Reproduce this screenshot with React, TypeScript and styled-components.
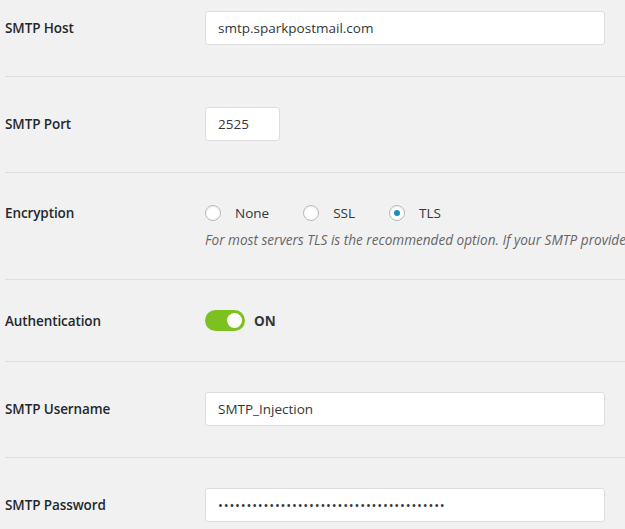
import React from "react";
import styled, {createGlobalStyle} from "styled-components";

const GlobalStyle = createGlobalStyle`
  html, body {
    margin: 0;
    padding: 0;
    background: #f1f1f1;
    overflow: hidden;
  }

  body {
    font-family: "Open Sans", "Noto Sans", sans-serif;
    font-size: 14px;
    color: #23282d;
  }
`;

const Form = styled.div`
  margin-left: 5px;
  display: flex;
  flex-direction: column;
`;

const Row = styled.div<{ $top?: number; $bottom?: number; $last?: boolean }>`
  display: flex;
  align-items: flex-start;
  padding: ${p => p.$top ?? 30}px 0 ${p => p.$bottom ?? 31}px;
  border-bottom: ${p => (p.$last ? "none" : "1px solid #dedede")};
`;

const Label = styled.div<{ $height?: number }>`
  width: 200px;
  flex-shrink: 0;
  height: ${p => p.$height ?? 34}px;
  display: flex;
  align-items: center;
  font-weight: 600;
  font-size: 13.5px;
  color: #23282d;
  letter-spacing: -0.1px;
`;

const Field = styled.div`
  display: flex;
  flex-direction: column;
  min-width: 0;
`;

const TextInput = styled.input<{ $width: number }>`
  box-sizing: border-box;
  width: ${p => p.$width}px;
  height: 34px;
  padding: 0 12px;
  border: 1px solid #dddddd;
  border-radius: 3px;
  background: #ffffff;
  font-family: "Open Sans", "Noto Sans", sans-serif;
  font-size: 13.5px;
  color: #32373c;
  outline: none;

  &[type="password"] {
    font-size: 13px;
    letter-spacing: 0.8px;
  }
`;

const RadioGroup = styled.div`
  display: flex;
  align-items: center;
  height: 20px;
`;

const RadioOption = styled.label`
  display: flex;
  align-items: center;
  gap: 14px;
  margin-right: 34px;
  font-size: 13.5px;
  color: #32373c;
`;

const RadioCircle = styled.span<{ $checked?: boolean }>`
  box-sizing: border-box;
  width: 16px;
  height: 16px;
  border-radius: 50%;
  border: 1px solid #b4b9be;
  background: #ffffff;
  box-shadow: inset 0 1px 2px rgba(0, 0, 0, 0.07);
  display: flex;
  align-items: center;
  justify-content: center;

  &::after {
    content: "";
    display: ${p => (p.$checked ? "block" : "none")};
    width: 6px;
    height: 6px;
    border-radius: 50%;
    background: #1e8cbe;
  }
`;

const Description = styled.p`
  margin: 7px 0 0;
  font-style: italic;
  font-size: 13.6px;
  line-height: 19px;
  color: #666666;
  white-space: nowrap;
`;

const ToggleWrap = styled.div`
  display: flex;
  align-items: center;
  gap: 9px;
  height: 21px;
`;

const Toggle = styled.span<{ $on?: boolean }>`
  box-sizing: border-box;
  width: 40px;
  height: 21px;
  border-radius: 11px;
  background: ${p => (p.$on ? "#7cc11f" : "#cccccc")};
  display: flex;
  align-items: center;
  justify-content: ${p => (p.$on ? "flex-end" : "flex-start")};
  padding: 0 3px;

  &::after {
    content: "";
    width: 15px;
    height: 15px;
    border-radius: 50%;
    background: #ffffff;
  }
`;

const ToggleText = styled.span`
  font-weight: 700;
  font-size: 13.5px;
  color: #32373c;
`;

export default function App() {
    const options = ["None", "SSL", "TLS"];

    return (
        <>
            <GlobalStyle/>
            <Form>
                <Row $top={11}>
                    <Label>SMTP Host</Label>
                    <Field>
                        <TextInput $width={400} defaultValue="smtp.sparkpostmail.com"/>
                    </Field>
                </Row>
                <Row>
                    <Label>SMTP Port</Label>
                    <Field>
                        <TextInput $width={75} defaultValue="2525"/>
                    </Field>
                </Row>
                <Row $bottom={30}>
                    <Label $height={20}>Encryption</Label>
                    <Field>
                        <RadioGroup>
                            {options.map(o => (
                                <RadioOption key={o}>
                                    <RadioCircle $checked={o === "TLS"}/>
                                    {o}
                                </RadioOption>
                            ))}
                        </RadioGroup>
                        <Description>
                            For most servers TLS is the recommended option. If your SMTP provider offers both SSL and TLS options, we recommend using TLS.
                        </Description>
                    </Field>
                </Row>
                <Row $bottom={30}>
                    <Label $height={21}>Authentication</Label>
                    <Field>
                        <ToggleWrap>
                            <Toggle $on/>
                            <ToggleText>ON</ToggleText>
                        </ToggleWrap>
                    </Field>
                </Row>
                <Row>
                    <Label>SMTP Username</Label>
                    <Field>
                        <TextInput $width={400} defaultValue="SMTP_Injection"/>
                    </Field>
                </Row>
                <Row $last>
                    <Label>SMTP Password</Label>
                    <Field>
                        <TextInput $width={400} type="password" defaultValue="abcdefghijklmnopqrstuvwxyz0123456789abcd"/>
                    </Field>
                </Row>
            </Form>
        </>
    );
}
